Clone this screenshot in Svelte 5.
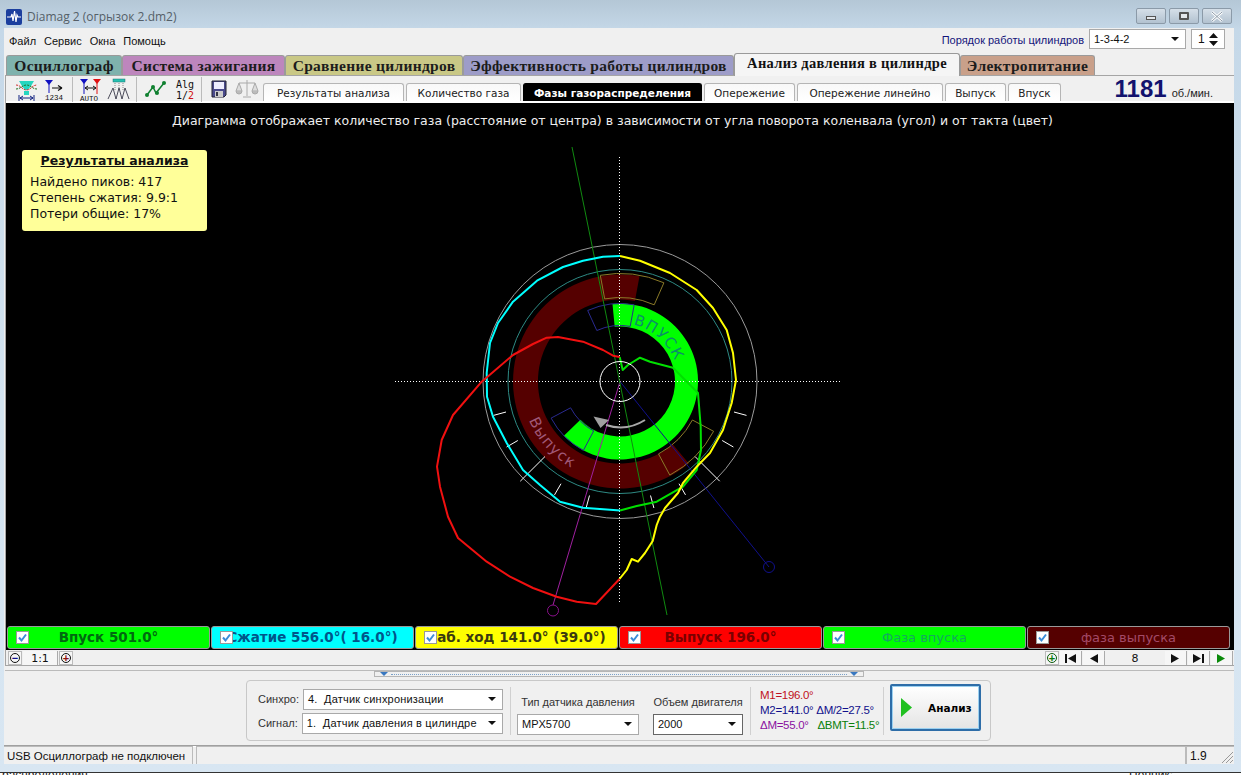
<script>
  const mainTabs = [
    { label: "Осциллограф", w: 116, color: "#7fb2ad" },
    { label: "Система зажигания", w: 163, color: "#bd86bd" },
    { label: "Сравнение цилиндров", w: 178, color: "#c9c886" },
    { label: "Эффективность работы цилиндров", w: 271, color: "#9d9cc8" },
    { label: "Анализ давления в цилиндре", w: 226, active: true },
    { label: "Электропитание", w: 135, color: "#c9a08a" },
  ];

  const subTabs = [
    { label: "Результаты анализа", w: 141 },
    { label: "Количество газа", w: 115 },
    { label: "Фазы газораспределения", w: 179, active: true },
    { label: "Опережение", w: 91 },
    { label: "Опережение линейно", w: 146 },
    { label: "Выпуск", w: 61 },
    { label: "Впуск", w: 53 },
  ];

  const indicators = [
    { label: "Впуск 501.0°", bg: "#00ff00", fg: "#006a10" },
    { label: "Сжатие 556.0°( 16.0°)", bg: "#00ffff", fg: "#00558a" },
    { label: "Раб. ход 141.0° (39.0°)", bg: "#ffff00", fg: "#3a3a10" },
    { label: "Выпуск 196.0°", bg: "#ff0000", fg: "#7a0000" },
    { label: "Фаза впуска", bg: "#00ff00", fg: "#14a860", thin: true },
    { label: "фаза выпуска", bg: "#550000", fg: "#a34a68", thin: true },
  ];

  const cx = 620;
  const cy = 381.5;

  function pt(r, deg) {
    const a = (deg * Math.PI) / 180;
    return (cx + r * Math.sin(a)).toFixed(1) + " " + (cy - r * Math.cos(a)).toFixed(1);
  }

  // annular sector, angles clockwise from the top
  function sector(r0, r1, a0, a1) {
    const big = a1 - a0 > 180 ? 1 : 0;
    return `M${pt(r1, a0)} A${r1} ${r1} 0 ${big} 1 ${pt(r1, a1)} L${pt(r0, a1)} A${r0} ${r0} 0 ${big} 0 ${pt(r0, a0)} Z`;
  }

  const ticks = [105, 120, 150, 165, 195, 210, 240, 255];

  const cyan = "620,256 603,256.7 583,260.7 563,267 537,280.7 513,301.7 498,323 490,343 486.7,373 487,396.7 493,416.7 506.7,443 523,470 540,485 560,501.7 583,507.7 620,510.5";
  const yellow = "620,256 640,260.7 670,273 696.7,290 713,308 726.7,330 733,353 736,380 731.7,403 723,430 710,453 696.7,466.7 683,483 678,493 665,508 660,516.7 656.7,525 652.7,541 645,553 638,561.7 631.7,559 626.7,570 619.5,579";
  const red = "619.5,579 596,604 576.7,601.7 556.7,596.7 533,588 510,576.7 486.7,561.7 458,538 448,516.7 440,486.7 437,466.7 441.7,440 453,415 481.7,381.7 513,355 533,344 546.7,337.7 558,337 583,341.7 603,350 613,355.7 619.7,357";
  const green = "619.7,357 622.7,370 628,365 640,357.7 650,361.7 673,367.7 698,393 700.7,426.7 701,450 696.7,470 683,486.7 656.7,501.7 636.7,506 620,510.5";
</script>

<div class="window">
  <header class="titlebar">
    <svg class="appicon" width="16" height="16" viewBox="0 0 16 16">
      <rect width="16" height="16" rx="2" fill="#1c3f9e" />
      <path d="M1 8H5L6 5 7 12 8.500 2 10 13 11 6 12 8H15" fill="none" stroke="#fff" stroke-width="1.200" />
    </svg>
    <span class="title">Diamag 2 (огрызок 2.dm2)</span>
    <div class="winbtns">
      <span class="winbtn"><i class="min"></i></span>
      <span class="winbtn"><i class="max"></i></span>
      <span class="winbtn close">
        <svg width="14" height="11" viewBox="0 0 14 11"><path d="M2 1L12 10M12 1L2 10" stroke="#fff" stroke-width="2.600" /><path d="M2 1L12 10M12 1L2 10" stroke="#8b9aa8" stroke-width="1" /></svg>
      </span>
    </div>
  </header>

  <div class="client">
    <div class="menurow">
      <nav class="menu">
        <span>Файл</span><span>Сервис</span><span>Окна</span><span>Помощь</span>
      </nav>
      <div class="order">
        <span class="orderlabel">Порядок работы цилиндров</span>
        <div class="combo ordercombo"><span>1-3-4-2</span><b></b></div>
        <div class="spin">
          <span>1</span>
          <svg width="9" height="15" viewBox="0 0 9 15"><path d="M0 6L4.500 1 9 6ZM0 9L4.500 14 9 9Z" fill="#111" /></svg>
        </div>
      </div>
    </div>

    <div class="maintabs">
      {#each mainTabs as tab}
        <div class="maintab" class:active={tab.active} style:width="{tab.w}px" style:--tab={tab.color}>{tab.label}</div>
      {/each}
    </div>

    <section class="panel">
      <div class="toolbar">
        <div class="tools">
          <div class="toolgroup first">
            <svg width="23" height="25" viewBox="0 0 23 25">
              <path d="M4 4H19L16 9 13 13H10L7 9Z" fill="#26d6c0" />
              <path d="M1 8C6 8 7 13 11.500 13S17 8 22 8" fill="none" stroke="#d03030" stroke-dasharray="2 1" />
              <path d="M1 12C6 12 7 8 11.500 8S17 12 22 12" fill="none" stroke="#207020" stroke-dasharray="2 1" />
              <path d="M9 14H14V18H9Z" fill="#26d6c0" />
              <path d="M5 21H18M5 21L8 19M5 21L8 23M18 21L15 19M18 21L15 23M4 18V24M19 18V24" fill="none" stroke="#102080" />
            </svg>
            <svg width="23" height="25" viewBox="0 0 23 25">
              <path d="M2 3H10L6 8Z" fill="#1010c0" />
              <path d="M6 7V16" stroke="#1010c0" />
              <path d="M9 11H19M19 11L15 8.500M19 11L15 13.500" fill="none" stroke="#111" stroke-width="1.200" />
              <text x="2" y="23" class="toolmini">1234</text>
            </svg>
          </div>
          <div class="toolgroup">
            <svg width="23" height="25" viewBox="0 0 23 25">
              <path d="M1 2H9L5 7Z" fill="#1010c0" />
              <path d="M14 2H22L18 7Z" fill="#e01010" />
              <path d="M5 6V17" stroke="#1010c0" /><path d="M18 6V17" stroke="#e01010" />
              <path d="M6 11H17M6 11L9 9M6 11L9 13M17 11L14 9M17 11L14 13" fill="none" stroke="#111" />
              <text x="1" y="24" class="toolmini">AUTO</text>
            </svg>
            <svg width="23" height="25" viewBox="0 0 23 25">
              <rect x="6" y="2" width="12" height="3" fill="#26c0b0" stroke="#207070" stroke-width="0.500" />
              <path d="M8 6V14M12 6V14M16 6V14" stroke="#888" stroke-dasharray="1 1" />
              <path d="M1 22L6 11 9 22 12 11 15 22 18 11 22 22" fill="none" stroke="#223" stroke-width="0.800" />
            </svg>
          </div>
          <div class="toolgroup">
            <svg width="24" height="25" viewBox="0 0 24 25">
              <path d="M4 18L10 10 13 16 21 6" fill="none" stroke="#108030" stroke-width="1.500" />
              <circle cx="4" cy="18" r="2" fill="#108030" /><circle cx="10" cy="10" r="2" fill="#108030" />
              <circle cx="14" cy="16" r="2" fill="#108030" /><circle cx="21" cy="6" r="2" fill="#108030" />
            </svg>
            <svg width="23" height="25" viewBox="0 0 23 25">
              <text x="4" y="11" class="toolalg">Alg</text>
              <text x="4" y="22" class="toolalg">1/<tspan fill="#d01010">2</tspan></text>
            </svg>
          </div>
          <div class="toolgroup">
            <svg width="22" height="25" viewBox="0 0 22 25">
              <path d="M4 4H18V18L16 20H4Z" fill="#4a4a8c" stroke="#223" />
              <rect x="6" y="5" width="10" height="7" fill="#eef" />
              <rect x="7" y="14" width="8" height="6" fill="#ccc" />
              <rect x="8" y="15" width="2" height="4" fill="#334" />
            </svg>
            <svg width="24" height="25" viewBox="0 0 24 25">
              <path d="M12 3V19M8 20H16M4 6H20M4 6L1 14H7ZM20 6L17 14H23Z" fill="#ddd" stroke="#aaa" />
              <path d="M1 14A3 3 0 0 0 7 14M17 14A3 3 0 0 0 23 14" fill="#bbb" stroke="#aaa" />
            </svg>
          </div>
        </div>
        <div class="subtabs">
          {#each subTabs as tab}
            <div class="subtab" class:active={tab.active} style:width="{tab.w}px">{tab.label}</div>
          {/each}
        </div>
        <div class="rpm"><strong>1181</strong><span>об./мин.</span></div>
      </div>

      <div class="plot">
        <svg class="chart" width="1227" height="519" viewBox="6 103 1227 519">
          <path d={sector(82, 107, 140, 370.5)} fill="#550000" />
          <path d={sector(55, 78, -5.5, 226)} fill="#00ff00" />

          <path d={sector(84, 108, -10.5, 24)} fill="none" stroke="#8a7a28" />
          <path d={sector(82, 106, 118, 152)} fill="none" stroke="#8a7a28" />
          <path d={sector(56, 78, -24.5, 10.5)} fill="none" stroke="#2a2a90" />
          <path d={sector(56, 78, 208, 242)} fill="none" stroke="#2a2a90" />

          <circle cx={cx} cy={cy} r="137" fill="none" stroke="#9a9a9a" />
          <circle cx={cx} cy={cy} r="112" fill="none" stroke="#2e8a84" />

          <path id="inletArc" d="M{pt(58.5, 13)} A58.500 58.500 0 0 1 {pt(58.5, 80)}" fill="none" />
          <path id="outletArc" d="M{pt(99, 247)} A99 99 0 0 0 {pt(99, 190)}" fill="none" />
          <text class="arc inlet"><textPath href="#inletArc">ВПУСК</textPath></text>
          <text class="arc outlet"><textPath href="#outletArc">Выпуск</textPath></text>

          <path d="M395 381.500H842M619.500 157V604" class="cross" />

          <path d="M{cx} {cy}L769 567" stroke="#10108c" fill="none" />
          <circle cx="769" cy="567" r="5.500" fill="none" stroke="#10108c" />
          <path d="M{cx} {cy}L553 605" stroke="#a020a0" fill="none" />
          <circle cx="553" cy="610.500" r="5.500" fill="none" stroke="#8a108a" />
          <path d="M572 147L667 615" stroke="#108a10" fill="none" />

          <path d="M645 420A46 46 0 0 1 606 425" fill="none" stroke="#a8a8a8" stroke-width="2" />
          <path d="M593.500 416.500L609 420 600.500 428Z" fill="#a0a0a0" />

          {#each ticks as a}
            <path d="M{pt(118, a)}L{pt(131, a)}" stroke="#fff" />
          {/each}
          <path d="M{pt(106, 135)}L{pt(141, 135)}M{pt(106, 225)}L{pt(141, 225)}" stroke="#fff" />

          <polyline points={green} class="curve" stroke="#00e000" />
          <polyline points={cyan} class="curve" stroke="#00ffff" />
          <polyline points={yellow} class="curve" stroke="#ffff00" />
          <polyline points={red} class="curve" stroke="#f01010" />

          <circle cx={cx} cy={cy} r="20" fill="none" stroke="#fff" />
        </svg>

        <p class="caption">Диаграмма отображает количество газа (расстояние от центра) в зависимости от угла поворота коленвала (угол) и от такта (цвет)</p>

        <div class="results">
          <h3>Результаты анализа</h3>
          <p>Найдено пиков: 417</p>
          <p>Степень сжатия: 9.9:1</p>
          <p>Потери общие: 17%</p>
        </div>
      </div>

      <div class="indicators">
        {#each indicators as item}
          <div class="indicator" class:thin={item.thin} style:background={item.bg} style:color={item.fg}>
            <span class="label">{item.label}</span>
            <span class="check">
              <svg width="11" height="11" viewBox="0 0 11 11"><path d="M2 5.500L4.500 8.500 9 2.500" fill="none" stroke="#3c8cd8" stroke-width="2" /></svg>
            </span>
          </div>
        {/each}
      </div>
    </section>

    <div class="navstrip">
      <div class="zoomctl">
        <span class="round"><i>−</i></span>
        <span class="ratio">1:1</span>
        <span class="round plus"><i>+</i></span>
      </div>
      <div class="pager">
        <span class="round greenplus"><i>+</i></span>
        <span class="navbtn"><svg width="11" height="9" viewBox="0 0 11 9"><path d="M0 0H2V9H0ZM11 0V9L3 4.500Z" fill="#111" /></svg></span>
        <span class="navbtn"><svg width="9" height="9" viewBox="0 0 9 9"><path d="M9 0V9L1 4.500Z" fill="#111" /></svg></span>
        <span class="pageno">8</span>
        <span class="navbtn"><svg width="9" height="9" viewBox="0 0 9 9"><path d="M0 0V9L8 4.500Z" fill="#111" /></svg></span>
        <span class="navbtn"><svg width="11" height="9" viewBox="0 0 11 9"><path d="M0 0V9L8 4.500ZM9 0H11V9H9Z" fill="#111" /></svg></span>
        <span class="navbtn"><svg width="9" height="9" viewBox="0 0 9 9"><path d="M0 0V9L8 4.500Z" fill="#0a8a0a" /></svg></span>
      </div>
    </div>

    <div class="splitter">
      <div class="grip">
        <svg width="8" height="4" viewBox="0 0 8 4"><path d="M0 0H8L4 4Z" fill="#3a78c0" /></svg>
        <span class="dots"></span>
        <svg width="8" height="4" viewBox="0 0 8 4"><path d="M0 0H8L4 4Z" fill="#3a78c0" /></svg>
      </div>
    </div>

    <div class="controlsarea">
      <div class="controls">
        <div class="sources">
          <label class="row"><span>Синхро:</span><div class="combo wide"><span>4.&nbsp; Датчик синхронизации</span><b></b></div></label>
          <label class="row"><span>Сигнал:</span><div class="combo wide"><span>1.&nbsp; Датчик давления в цилиндре</span><b></b></div></label>
        </div>
        <div class="sep"></div>
        <div class="field sensor">
          <span>Тип датчика давления</span>
          <div class="combo"><span>MPX5700</span><b></b></div>
        </div>
        <div class="field volume">
          <span>Объем двигателя</span>
          <div class="combo dark"><span>2000</span><b></b></div>
        </div>
        <div class="sep"></div>
        <div class="readout">
          <div class="m1">M1=196.0°</div>
          <div class="m2">M2=141.0° <span class="half">ΔM/2=27.5°</span></div>
          <div class="m3">ΔM=55.0° <span class="bmt">ΔBMT=11.5°</span></div>
        </div>
        <div class="sep"></div>
        <button class="analyze">
          <svg width="11" height="19" viewBox="0 0 11 19"><path d="M0 0L11 9.500 0 19Z" fill="#20c020" /></svg>
          <span>Анализ</span>
        </button>
      </div>
    </div>

    <footer class="statusbar">
      <div class="cell usb">USB Осциллограф не подключен</div>
      <div class="cell middle"></div>
      <div class="cell version">
        1.9
        <svg class="resize" width="12" height="12" viewBox="0 0 12 12"><path d="M12 1L1 12M12 5L5 12M12 9L9 12" stroke="#999" /></svg>
      </div>
    </footer>
  </div>

  <div class="behind">
    <span>распределения</span>
    <span class="right">Ценник:</span>
  </div>
</div>

<style>
  :global(body) {
    margin: 0;
    overflow: hidden;
  }

  * {
    box-sizing: border-box;
  }

  .window {
    width: 1241px;
    height: 775px;
    display: flex;
    flex-direction: column;
    overflow: hidden;
    background: linear-gradient(#b4c7d6, #c5d8e8 30px, #d3e3f0 400px, #d8e6f2);
    font-family: "Liberation Sans", Arial, sans-serif;
    font-size: 11px;
    color: #111;
  }

  .titlebar {
    height: 28px;
    flex: none;
    display: flex;
    align-items: flex-start;
    padding: 9px 9px 0 6px;
  }

  .appicon {
    flex: none;
  }

  .title {
    margin-left: 5px;
    font-family: "Open Sans", sans-serif;
    font-size: 12px;
    line-height: 16px;
    color: #555f68;
  }

  .winbtns {
    margin-left: auto;
    display: flex;
    gap: 3px;
    margin-top: -1px;
  }

  .winbtn {
    width: 30px;
    height: 16px;
    border: 1px solid #8b9aa8;
    border-radius: 2px;
    background: linear-gradient(#d5dfe8, #b2c2d0);
    display: flex;
    align-items: center;
    justify-content: center;
  }

  .winbtn .min {
    width: 10px;
    height: 4px;
    margin-top: 4px;
    border: 1px solid #555;
    background: #e4e8ec;
  }

  .winbtn .max {
    width: 10px;
    height: 8px;
    border: 2px solid #555;
    border-radius: 1px;
    background: #e4e8ec;
  }

  .client {
    margin: 0 7px 0 4px;
    height: 736px;
    flex: none;
    background: #f0f0f0;
    display: flex;
    flex-direction: column;
  }

  .menurow {
    height: 26px;
    flex: none;
    display: flex;
    align-items: flex-start;
    padding: 1px 9px 0 5px;
  }

  .menu {
    display: flex;
    gap: 8px;
    line-height: 24px;
  }

  .order {
    margin-left: auto;
    display: flex;
    align-items: flex-start;
  }

  .orderlabel {
    color: #14147a;
    line-height: 22px;
    margin-right: 5px;
  }

  .combo {
    height: 21px;
    background: #fff;
    border: 1px solid #a9a9a9;
    display: flex;
    align-items: center;
    padding-left: 4px;
    line-height: 17px;
    white-space: nowrap;
  }

  .combo b {
    margin-left: auto;
    margin-right: 6px;
    border: 4px solid transparent;
    border-top: 4px solid #111;
    border-bottom: 0;
  }

  .combo.dark {
    border-color: #666;
  }

  .ordercombo {
    width: 97px;
    height: 20px;
  }

  .spin {
    width: 34px;
    height: 20px;
    margin-left: 5px;
    background: #fff;
    border: 1px solid #a9a9a9;
    display: flex;
    align-items: center;
    justify-content: space-between;
    padding: 0 6px 0 6px;
    font-size: 12px;
  }

  .maintabs {
    height: 21px;
    flex: none;
    display: flex;
    padding-left: 2px;
    align-items: flex-end;
  }

  .maintab {
    height: 20px;
    flex: none;
    margin-right: 0;
    border: 1px solid #9a9a9a;
    border-bottom: 0;
    border-radius: 3px 3px 0 0;
    background: linear-gradient(var(--tab), var(--tab));
    font-family: "Liberation Serif", serif;
    font-size: 15.500px;
    font-weight: bold;
    line-height: 19px;
    letter-spacing: 0.300px;
    text-align: center;
    white-space: nowrap;
    color: #1c1c1c;
  }

  .maintab.active {
    height: 23px;
    position: relative;
    margin-bottom: -1px;
    background: #f5f5f5;
    font-size: 14.500px;
    color: #111;
    z-index: 1;
  }

  .panel {
    margin-left: 1px;
    flex: none;
    border: 1px solid #a5a5a5;
    border-bottom: 0;
    border-right: 0;
    background: #000;
  }

  .toolbar {
    height: 27px;
    background: #f0f0f0;
    display: flex;
    align-items: flex-end;
    border-bottom: 2px solid #fff;
    box-shadow: inset 0 0 0 0 #aaa;
  }

  .tools {
    display: flex;
    width: 257px;
    height: 25px;
    align-self: flex-start;
    margin-top: 1px;
    flex: none;
  }

  .toolgroup {
    display: flex;
    gap: 5px;
    padding: 0 6px;
    border-left: 1px solid #bbb;
  }

  .toolgroup.first {
    border-left: 0;
    padding-left: 9px;
  }

  .toolmini {
    font-family: "Liberation Mono", monospace;
    font-size: 7.500px;
    fill: #111;
  }

  .toolalg {
    font-family: "DejaVu Sans Mono", monospace;
    font-size: 10px;
    fill: #111;
  }

  .subtabs {
    display: flex;
    gap: 2px;
    padding-left: 0;
    flex: none;
    height: 18px;
  }

  .subtab {
    flex: none;
    height: 18px;
    border: 1px solid #b5b5b5;
    border-bottom: 0;
    border-radius: 3px 3px 0 0;
    background: linear-gradient(#f8f8f8, #fff);
    font-family: "DejaVu Sans", sans-serif;
    font-size: 10.500px;
    line-height: 18px;
    text-align: center;
    white-space: nowrap;
    color: #222;
  }

  .subtab.active {
    background: #000;
    border-color: #000;
    color: #fff;
    font-weight: bold;
  }

  .rpm {
    margin-left: auto;
    margin-right: 21px;
    display: flex;
    align-items: baseline;
    gap: 5px;
    height: 25px;
    align-self: flex-start;
  }

  .rpm strong {
    font-size: 24px;
    line-height: 26px;
    color: #12126e;
    letter-spacing: 0;
  }

  .rpm span {
    font-size: 11px;
    color: #222;
  }

  .plot {
    position: relative;
    height: 519px;
    background: #000;
  }

  .chart {
    display: block;
  }

  .cross {
    fill: none;
    stroke: #fff;
    stroke-dasharray: 1 2;
    shape-rendering: crispEdges;
  }

  .curve {
    fill: none;
    stroke-width: 2;
    stroke-linejoin: round;
  }

  .arc {
    font-family: "DejaVu Sans", sans-serif;
    font-size: 15px;
    letter-spacing: 1.300px;
  }

  .inlet {
    fill: #0a8f6a;
  }

  .outlet {
    fill: #a05878;
  }

  .caption {
    position: absolute;
    top: 9px;
    left: 0;
    right: 15px;
    margin: 0;
    text-align: center;
    font-family: "DejaVu Sans", sans-serif;
    font-size: 12.500px;
    line-height: 17px;
    color: #eee;
    white-space: nowrap;
  }

  .results {
    position: absolute;
    left: 16px;
    top: 47px;
    width: 185px;
    height: 81px;
    background: #ffff99;
    border-radius: 3px;
    padding: 3px 8px;
    font-family: "DejaVu Sans", sans-serif;
    font-size: 12.500px;
    line-height: 16px;
    color: #111;
  }

  .results h3 {
    margin: 0 0 5px;
    font-size: 12.500px;
    line-height: 16px;
    text-align: center;
    text-decoration: underline;
  }

  .results p {
    margin: 0;
  }

  .indicators {
    height: 28px;
    display: flex;
    gap: 1px;
    padding: 4px 0 1px 1px;
    background: #000;
  }

  .indicator {
    position: relative;
    width: 203px;
    flex: none;
    height: 23px;
    border: 1px solid #999;
    border-radius: 3px;
    text-align: center;
    overflow: hidden;
    font-family: "DejaVu Sans", sans-serif;
    font-size: 13.500px;
    font-weight: bold;
    line-height: 21px;
    white-space: nowrap;
  }

  .indicator.thin {
    font-weight: normal;
    font-size: 13px;
  }

  .check {
    position: absolute;
    left: 8px;
    top: 4px;
    width: 13px;
    height: 13px;
    background: #fff;
    border: 1px solid #9a9a9a;
    display: flex;
    align-items: center;
    justify-content: center;
  }

  .navstrip {
    height: 16px;
    flex: none;
    display: flex;
    justify-content: space-between;
    padding: 1px 1px 0 2px;
    border-left: 1px solid #a5a5a5;
    border-bottom: 1px solid #a5a5a5;
    margin-left: 1px;
  }

  .zoomctl,
  .pager {
    display: flex;
    align-items: stretch;
    gap: 1px;
  }

  .round {
    width: 14px;
    border: 1px solid #bbb;
    position: relative;
    background: #f6f6f6;
  }

  .round i {
    position: absolute;
    left: 1px;
    top: 0;
    width: 10px;
    height: 10px;
    margin-top: 1px;
    border: 1px solid #111;
    border-radius: 50%;
    font-style: normal;
    font-weight: bold;
    font-size: 11px;
    line-height: 8px;
    text-align: center;
    color: #10108c;
  }

  .round.plus i {
    color: #8c1010;
  }

  .round.greenplus i {
    color: #0a7a0a;
    border-color: #0a5a0a;
  }

  .ratio {
    width: 35px;
    text-align: center;
    background: #f6f6f6;
    font-family: "DejaVu Sans", sans-serif;
    font-size: 11px;
    line-height: 15px;
    border-right: 1px solid #aaa;
  }

  .navbtn {
    width: 22px;
    display: flex;
    align-items: center;
    justify-content: center;
    background: #f6f6f6;
    border-right: 1px solid #aaa;
  }

  .pageno {
    width: 58px;
    text-align: center;
    font-family: "DejaVu Sans", sans-serif;
    font-size: 11px;
    line-height: 15px;
  }

  .splitter {
    height: 14px;
    flex: none;
    margin-left: 1px;
    padding: 5px 370px 0 369px;
    background: linear-gradient(#f0f0f0 4px, #bbb 4px, #bbb 5px, #f0f0f0 5px);
  }

  .grip {
    height: 6px;
    background: #f0f0f0;
    border: 1px solid #b5b5b5;
    display: flex;
    align-items: center;
    gap: 3px;
    padding: 0 5px;
  }

  .dots {
    flex: 1;
    border-top: 1px dotted #7aa0c8;
  }

  .controlsarea {
    height: 65px;
    flex: none;
    padding-left: 242px;
  }

  .controls {
    width: 745px;
    height: 61px;
    border: 1px solid #c8c8c8;
    border-radius: 4px;
    display: flex;
    align-items: center;
    padding: 0 9px 0 11px;
    background: #f0f0f0;
  }

  .sources {
    display: flex;
    flex-direction: column;
    gap: 3px;
    margin-top: 1px;
  }

  .row {
    display: flex;
    align-items: center;
    gap: 4px;
    width: 245px;
    color: #333;
  }

  .row span {
    flex: none;
  }

  .combo.wide {
    width: 202px;
    color: #111;
    letter-spacing: 0.200px;
  }

  .sep {
    width: 1px;
    height: 48px;
    background: #d0d0d0;
    flex: none;
  }

  .sources + .sep {
    margin-left: 7px;
  }

  .field {
    display: flex;
    flex-direction: column;
    justify-content: flex-end;
    height: 46px;
    margin-top: 2px;
  }

  .field > span {
    line-height: 23px;
    white-space: nowrap;
    text-align: center;
    color: #333;
  }

  .sensor {
    width: 122px;
    margin-left: 6px;
  }

  .volume {
    width: 90px;
    margin-left: 14px;
  }

  .volume + .sep {
    margin-left: 7px;
  }

  .readout {
    width: 122px;
    padding-left: 9px;
    font-size: 11.500px;
    line-height: 15px;
    white-space: nowrap;
    flex: none;
    letter-spacing: -0.300px;
  }

  .m1 {
    color: #c01020;
  }

  .m2 {
    color: #10108c;
  }

  .m3 {
    color: #8a10a0;
  }

  .bmt {
    color: #0a800a;
    margin-left: 6px;
  }

  .readout + .sep {
    margin-left: 10px;
  }

  .analyze {
    width: 91px;
    height: 47px;
    margin-left: 6px;
    margin-top: -6px;
    flex: none;
    border: 2px solid #2e6da8;
    border-radius: 2px;
    box-shadow: inset 0 0 0 1px #9bd0f0;
    background: linear-gradient(#fff, #e4e4e4);
    display: flex;
    align-items: center;
    padding: 0 0 0 9px;
    font-family: "DejaVu Sans", sans-serif;
    font-size: 10.500px;
    font-weight: bold;
    color: #000;
  }

  .analyze span {
    margin-left: 16px;
  }

  .statusbar {
    height: 19px;
    flex: none;
    display: flex;
    border-top: 1px solid #a0a0a0;
    box-shadow: inset 0 1px 0 #fff;
  }

  .cell {
    height: 100%;
    padding: 2px 3px 0;
    line-height: 15px;
    border-top: 1px solid #bbb;
    border-right: 1px solid #bbb;
  }

  .usb {
    width: 189px;
    font-size: 11.500px;
  }

  .middle {
    width: 990px;
    margin-left: 3px;
    border-left: 1px solid #bbb;
  }

  .version {
    flex: 1;
    position: relative;
    border-left: 1px solid #bbb;
    border-right: 0;
    font-size: 12px;
  }

  .resize {
    position: absolute;
    right: 1px;
    bottom: 1px;
  }

  .behind {
    margin-top: 8px;
    flex: none;
    height: 3px;
    border-top: 1px solid #333;
    background: #fff;
    display: flex;
    justify-content: space-between;
    overflow: hidden;
    font-size: 12px;
    line-height: 4px;
    color: #222;
    padding: 0 68px 0 2px;
  }
</style>
